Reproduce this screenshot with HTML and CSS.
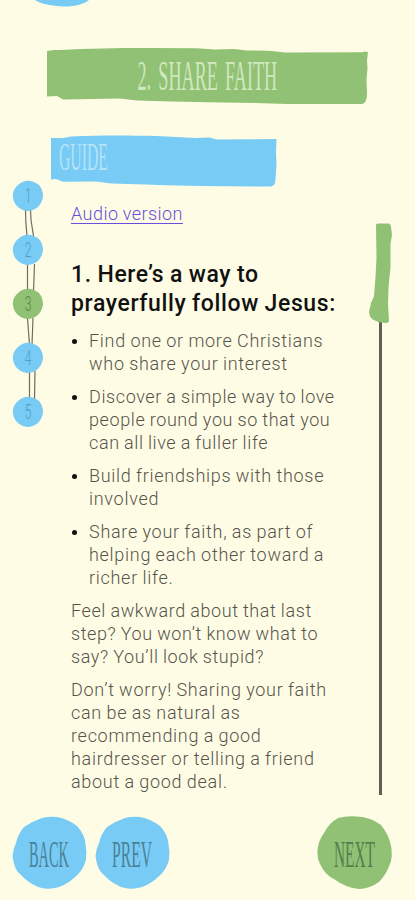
FILE: index.html
```html
<!DOCTYPE html>
<html lang="en">
<head>
<meta charset="utf-8">
<title>Share Faith</title>
<link rel="stylesheet" href="styles.css">
</head>
<body>
<div class="page">
  <svg class="logo-blob" width="60" height="7" viewBox="0 0 60 7"><path class="blue" d="M2 0C8 4 18 6 31 6.500C43 6.500 51 4 56 0Z"/></svg>
  <svg class="banner" width="322" height="58" viewBox="0 0 322 58">
    <path class="green" d="M0 4L7 3L13 3C40 1.500 70 1 100 1L150 1.200L168 2.500L187 2L200 3.500L222 3.800L238 5.500L316 5.300L317 4.500L321 5L320 13L320.500 22L319.500 32L320 46Q320 56.500 315 57L240 57L208 56L175 55.500L125 54.500L90 53.500L73 51.500L16 52.500L10 49L0 49.500Z"/>
    <text class="sketch title" transform="translate(90.5 42.5) scale(.433 1)">2. SHARE FAITH</text>
  </svg>
  <svg class="guide" width="228" height="54" viewBox="0 0 228 54">
    <path class="blue" d="M0 3L12 3L20 1.500C55 0 80 .5 105 1L145 3L158 2.500L166 4.500L225.500 4L225 18L225.500 30L224.500 44Q224.500 51 220 51.500L150 51L115 50.200L95 49.500L60 48.500L45 46.500L12 46.800L5 44L0 44.500Z"/>
    <text class="sketch guide-text" transform="translate(8 35) scale(.384 1)">GUIDE</text>
  </svg>
  <div class="columns">
    <svg class="steps" width="34" height="250" viewBox="0 0 34 250">
      <g class="wire">
        <path d="M13.500 30Q13.500 42 15 56M18.500 30L19 40L21.500 56M15.500 84V112M22.500 84L21.500 112M15.500 138L17.500 165M21 138L20 165M17.500 191V220M23 191L22.500 220"/>
      </g>
      <path id="dot" class="blue" d="M.8 16Q1 9 6 5Q11 .8 16 .8Q22 1 27 5Q31 10 31 16Q30.500 22 26 27Q21 31 15 31Q8 30 4 25Q1 21 .8 16Z"/>
      <use href="#dot" y="54"/>
      <path class="green" d="M.8 124Q1 117 6 113Q11 108.800 16 108.800Q22 109 27 113Q31 118 31 124Q30.500 130 26 135Q21 139 15 139Q8 138 4 133Q1 129 .8 124Z"/>
      <use href="#dot" y="162"/>
      <use href="#dot" y="216"/>
      <g class="nums">
        <text transform="translate(16 22.5) scale(.6 1)">1</text>
        <text transform="translate(16 76.5) scale(.6 1)">2</text>
        <text class="current" transform="translate(16 130.500) scale(.6 1)">3</text>
        <text transform="translate(16 184.500) scale(.6 1)">4</text>
        <text transform="translate(16 238.500) scale(.6 1)">5</text>
      </g>
    </svg>
    <article class="content">
      <a class="audio" href="#">Audio version</a>
      <h1>1. Here’s a way to<br>prayerfully follow Jesus:</h1>
      <ul>
        <li class="wide">Find one or more Christians<br>who share your interest</li>
        <li>Discover a simple way to love<br>people round you so that you<br>can all live a fuller life</li>
        <li class="wide">Build friendships with those<br>involved</li>
        <li class="wide">Share your faith, as part of<br>helping each other toward a<br>richer life.</li>
      </ul>
      <p>Feel awkward about that last<br>step? You won’t know what to<br>say? You’ll look stupid?</p>
      <p class="wide">Don’t worry! Sharing your faith<br>can be as natural as<br>recommending a good<br>hairdresser or telling a friend<br>about a good deal.</p>
    </article>
    <svg class="scroll" width="26" height="574" viewBox="0 0 26 574">
      <path class="track" d="M12.500 98V573"/>
      <path class="green" d="M8 3Q8 1.500 10 1.500H21Q23 2 23 5L24 13L22.500 22L22.500 45L20.500 65L20 82L21 99Q20.500 101.500 17 101L10 100L4 97Q1 94 1 90L3 81L6 74L7.500 55L8.500 36Z"/>
    </svg>
  </div>
  <nav class="buttons">
    <svg width="76" height="74" viewBox="0 0 76 74"><path id="big" class="blue" d="M.5 40Q1 33 4 27Q6 18 12 11Q21 5 30 2Q37 0 45 1Q56 3 65 10Q73 19 73.500 28Q75 36 74 44Q71 55 62 62Q53 70 43 72Q34 74 26 71Q15 66 9 59Q2 54 .5 40Z"/><text class="sketch btn" transform="translate(17 51) scale(.389 1)">BACK</text></svg>
    <svg width="76" height="74" viewBox="0 0 76 74"><use href="#big"/><text class="sketch btn" transform="translate(17 51) scale(.423 1)">PREV</text></svg>
    <svg class="next" width="76" height="74" viewBox="0 0 76 74"><path class="green" d="M.5 35Q1 25 7 17Q12 7 21 2Q30-.5 40 .5Q54 1 64 9Q71 18 73 26Q76 36 74 45Q70 58 62 66Q52 73 42 73Q29 72 17 63Q8 59 3 48Q0 43 .5 35Z"/><text class="sketch btn" transform="translate(17 51) scale(.416 1)">NEXT</text></svg>
  </nav>
</div>
</body>
</html>
```
FILE: styles.css
```css
* { box-sizing: border-box; }
body { margin: 0; background: #fffce5; color: #55544c; font-family: Roboto, "Open Sans", sans-serif; }
svg { display: block; flex: none; }
.page { width: 415px; height: 900px; overflow: hidden; display: flex; flex-direction: column; align-items: flex-start; }
.blue { fill: #78cbf4; }
.green { fill: #91c174; }
.logo-blob { margin-left: 33px; }
.banner { margin: 40px 0 0 47px; }
.guide { margin: 30px 0 0 51px; overflow: visible; }
.sketch { font-family: "Liberation Serif", serif; }
.title { font-size: 42px; fill: #cfe8bd; word-spacing: 6px; }
.guide-text { font-size: 41px; fill: #b5e3f8; }
.columns { display: flex; width: 100%; height: 616px; margin-top: -9px; }
.steps { margin: 0 24px 0 12px; }
.wire { fill: none; stroke: #706c61; stroke-width: 1.2; }
.nums { font: 300 20px Roboto, sans-serif; fill: #519fc4; text-anchor: middle; }
.nums .current { fill: #5c8a4c; }
.content { width: 280px; margin-left: 1px; padding-top: 22px; font-size: 18px; font-weight: 300; line-height: 23px; letter-spacing: .6px; word-spacing: -.6px; white-space: nowrap; }
.wide { letter-spacing: .71px; }
.audio { display: block; width: max-content; color: #6650dc; letter-spacing: .45px; text-underline-offset: 3px; text-decoration-thickness: 1px; }
h1 { margin: 35px 0 11px; color: #111; font-size: 23px; font-weight: 500; line-height: 29px; letter-spacing: .62px; word-spacing: -.6px; }
ul { margin: 0; padding: 0 0 0 18px; list-style: none; }
li { margin-bottom: 10px; display: block; position: relative; }
li::before { content: ""; position: absolute; left: -17px; top: 10px; width: 5px; height: 5px; border-radius: 50%; background: #111; }
p { margin: 0 0 10px; }
.scroll { margin: 42px 0 0 17px; }
.track { stroke: #5f5f5a; stroke-width: 3; }
.buttons { display: flex; width: 100%; gap: 7px; padding: 0 22px 0 12px; margin-top: 20px; }
.next { margin-left: auto; }
.btn { font-size: 37px; fill: #4a8299; }
.next .btn { fill: #52804c; }
```
